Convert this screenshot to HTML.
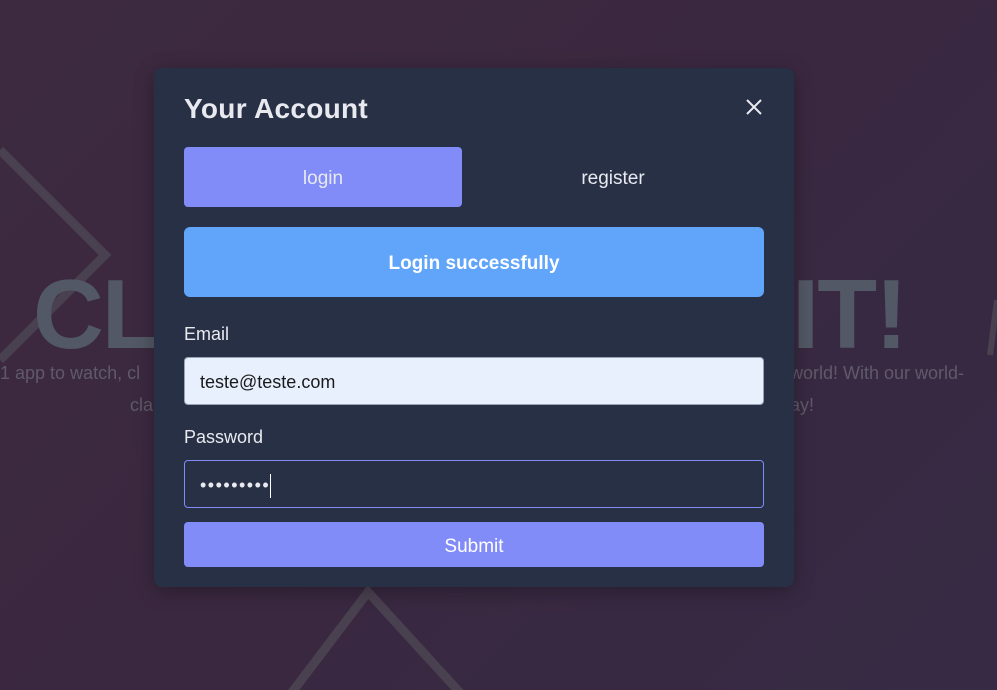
<!DOCTYPE html>
<html><head><style>
*{box-sizing:border-box;margin:0;padding:0}
body{width:997px;height:690px;overflow:hidden;position:relative;font-family:"Liberation Sans",sans-serif;
background:linear-gradient(135deg,#3d2a40 0%,#3a2840 50%,#362a44 100%);}
.big{position:absolute;top:258px;font-size:98px;font-weight:bold;color:#525865;letter-spacing:-2px}
.sub{position:absolute;font-size:18px;color:#5f5a6a;white-space:nowrap}
.modal{position:absolute;left:154px;top:68px;width:640px;height:519px;background:#283046;border-radius:8px;box-shadow:0 4px 20px rgba(0,0,0,.3)}
h2{position:absolute;left:30px;top:25px;font-size:28px;color:#e8eaf0;font-weight:bold;letter-spacing:.3px}
.x{position:absolute;left:590px;top:29px}
.tab{position:absolute;top:79px;height:60px;width:278px;border-radius:4px;color:#e8eaf0;font-size:19px;text-align:center;line-height:63px}
.alert{position:absolute;left:30px;top:159px;width:580px;height:70px;background:#60a5fa;border-radius:6px;color:#fff;font-weight:bold;font-size:19px;text-align:center;line-height:73px}
.lbl{position:absolute;left:30px;font-size:18px;color:#e8eaf0}
.inp{position:absolute;left:30px;width:580px;height:48px;border-radius:4px;font-size:18px;padding-left:15px;line-height:48px}
.btn{position:absolute;left:30px;top:454px;width:580px;height:45px;background:#818cf8;border-radius:4px;color:#fff;font-size:19px;text-align:center;line-height:49px}
</style></head><body>
<svg width="997" height="690" style="position:absolute;left:0;top:0">
<polyline points="0,150 105,255 0,360" fill="none" stroke="#4a4150" stroke-width="9"/>
<polyline points="290,695 368,592 462,695" fill="none" stroke="#4a4150" stroke-width="9"/>
<line x1="997" y1="300" x2="990" y2="355" stroke="#4a4150" stroke-width="6"/>
</svg>
<div class="big" style="left:33px">CLI</div>
<div class="big" style="left:792px">IT!</div>
<div class="sub" style="left:0;top:363px">1 app to watch, cl</div>
<div class="sub" style="left:130px;top:395px">cla</div>
<div class="sub" style="left:790px;top:363px">world! With our world-</div>
<div class="sub" style="left:790px;top:395px">ay!</div>
<div class="modal">
<h2>Your Account</h2>
<svg class="x" width="20" height="20" viewBox="0 0 20 20"><path d="M3 3L17 17M17 3L3 17" stroke="#e8eaf0" stroke-width="2"/></svg>
<div class="tab" style="left:30px;background:#818cf8">login</div>
<div class="tab" style="left:320px">register</div>
<div class="alert">Login successfully</div>
<div class="lbl" style="top:256px">Email</div>
<div class="inp" style="top:289px;background:#e8f0fe;border:1px solid #9aa3b5;color:#1a1a1a">teste@teste.com</div>
<div class="lbl" style="top:359px">Password</div>
<div class="inp" style="top:392px;border:1px solid #818cf8;color:#e8eaf0;font-size:18px;letter-spacing:1.5px">•••••••••<span style="display:inline-block;width:1px;height:24px;background:#fff;vertical-align:middle;margin-left:0"></span></div>
<div class="btn">Submit</div>
</div>
</body></html>
